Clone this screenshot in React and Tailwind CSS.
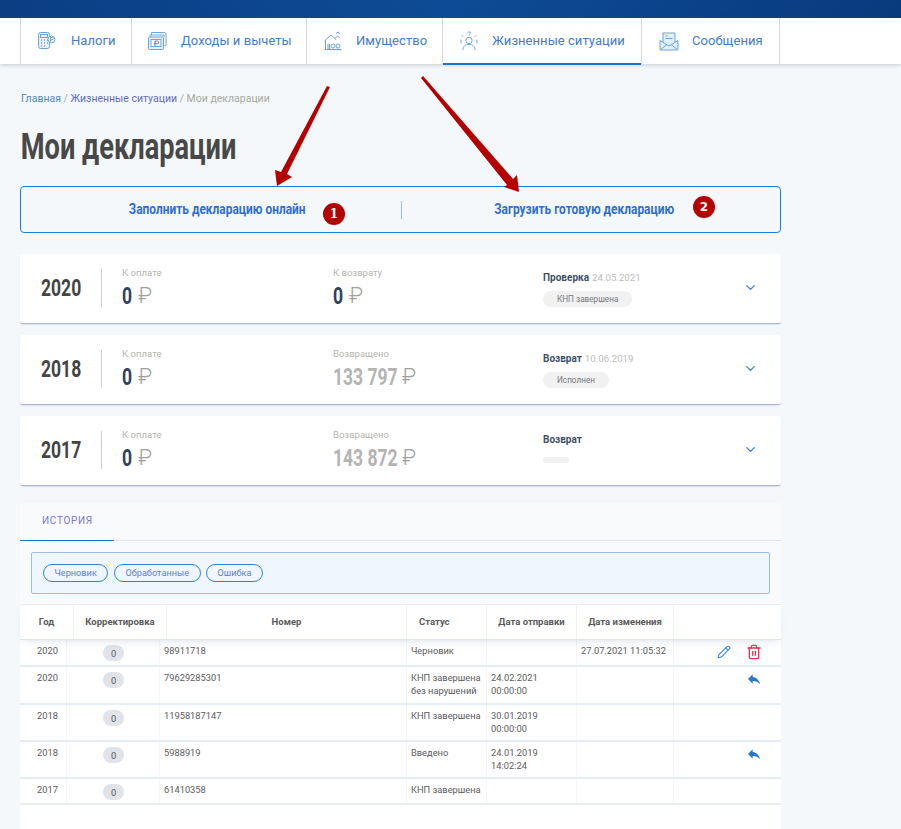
import React from "react";
import { Pencil, Trash2, ChevronDown } from "lucide-react";
import { MdReply } from "react-icons/md";

const I = ({ children, w = 22, h = 22 }) => (
  <svg width={w} height={h} viewBox="0 0 22 22" fill="none" stroke="#6ba3de" strokeWidth="1" className="shrink-0">{children}</svg>
);
const icons = [
  <I key="a"><rect x="2.500" y="2.500" width="11" height="16" rx="2" fill="#e3effa" /><rect x="4.500" y="4.500" width="7" height="3" /><path d="M5 10h1M8 10h1M11 10h1M5 13h1M8 13h1M11 13h1M5 16h1M8 16h1" strokeWidth="1.400" /><circle cx="15.500" cy="9.500" r="3.400" fill="#fff" /><path d="M14.500 11.500v-4h1.600a1 1 0 0 1 0 2.200h-2" /></I>,
  <I key="b"><path d="M4.500 5V2.500h13a1.500 1.500 0 0 1 1.500 1.500v11.500h-1.500" /><path d="M3 7V5h14v2" /><rect x="1.500" y="7" width="15" height="12.500" rx="1" fill="#e3effa" /><rect x="4" y="9.500" width="10" height="7" fill="#fff" /><path d="M8 16v-5h2.500a1.300 1.300 0 0 1 0 2.700H7" stroke="#4a86cc" /></I>,
  <I key="c"><path d="M2.500 11 9 5l5 4.500M3.500 10v9M13 8.500l2.500-2.500 2 1.500" /><path d="M2.500 19.500h17" strokeWidth="1.200" /><path d="M6 19v-5M7.500 19v-5" /><circle cx="11" cy="16" r="2" /><circle cx="16" cy="16" r="2" /><path d="M14 3.500l2.500-1.500 1 2" /></I>,
  <I key="d"><circle cx="11" cy="10.500" r="3.200" /><path d="M5 20c0-4 2.500-5.500 6-5.500s6 1.500 6 5.500" /><path d="M9.500 3c.5-1.500 3-1.500 3 0 0 1-1.500 1-1.500 2M4 5.500l1 1M18 5.500l-1 1M3 10v3M19 10v3" strokeLinecap="round" /></I>,
  <I key="e"><path d="M2 10.500v8.500a1 1 0 0 0 1 1h16a1 1 0 0 0 1-1v-8.500" fill="#e3effa" /><path d="M5 12V3h12v9" fill="#e3effa" /><path d="M7.500 6h2M7.500 8.500h7" /><path d="M2 10.500 11 16l9-5.500M2 20l7-5.500M20 20l-7-5.500" /></I>,
];

const navItems = [
  ["Налоги", "w-[111px]", 0, "pl-[15px]", "gap-[13px]"],
  ["Доходы и вычеты", "w-[175px]", 1, "pl-[15px]", "gap-[12px]"],
  ["Имущество", "w-[136px]", 2, "pl-[15px]", "gap-[12px]"],
  ["Жизненные ситуации", "w-[199px]", 3, "pl-[15px]", "gap-[12px]"],
  ["Сообщения", "w-[139px]", 4, "pl-[16px]", "gap-[12px]"],
];

const cards = [
  { year: "2020", right: "К возврату", amount: "0", dark: true, status: "Проверка", date: "24.05.2021", chip: "КНП завершена" },
  { year: "2018", right: "Возвращено", amount: "133 797", dark: false, status: "Возврат", date: "10.06.2019", chip: "Исполнен" },
  { year: "2017", right: "Возвращено", amount: "143 872", dark: false, status: "Возврат", date: "", chip: "" },
];

const Amount = ({ value, dark }) => (
  <div className="flex items-center gap-[4px] h-[25px] mt-[4px]">
    <div className={dark ? "w-[12px]" : "w-[65px]"}>
      <div className={`origin-left scale-x-[0.73] whitespace-nowrap font-bold text-[24px] leading-none ${dark ? "text-[#2c4260]" : "text-[#b4b4b4]"}`}>{value}</div>
    </div>
    <span className="text-[22px] font-light leading-none text-[#9f9f9f]">₽</span>
  </div>
);

const Card = ({ c }) => (
  <div className="h-[70px] bg-white rounded-[3px] border-b border-[#aab5d1] flex items-start pl-[21px] shadow-[0_1px_1px_rgba(170,181,209,0.3)]">
    <div className="w-[60px] mt-[22px] origin-left scale-x-[0.73] font-bold text-[24px] leading-none text-[#444444] whitespace-nowrap">{c.year}</div>
    <div className="w-px h-[38px] mt-[15px] bg-[#c9cfd8]" />
    <div className="w-[231px] pl-[20px] pt-[13px]">
      <div className="text-[9.6px] leading-[12px] text-[#b5b5b0]">К оплате</div>
      <Amount value="0" dark />
    </div>
    <div className="w-[210px] pt-[13px]">
      <div className="text-[9.5px] leading-[12px] text-[#b5b5b0]">{c.right}</div>
      <Amount value={c.amount} dark={c.dark} />
    </div>
    <div className="w-[200px] pt-[16px]">
      <div className="flex items-baseline gap-[3px] h-[15px]">
        <span className="text-[10px] font-bold text-[#3e5068]">{c.status}</span>
        <span className="text-[9.7px] text-[#bcbcbc]">{c.date}</span>
      </div>
      {c.chip ? (
        <div className="mt-[4px] inline-flex h-[16px] items-center rounded-full bg-[#f1f1f1] px-[14px] text-[8.2px] text-[#77787c]">{c.chip}</div>
      ) : (
        <div className="mt-[10px] h-[6px] w-[26px] rounded-[3px] bg-[#f1f1f1]" />
      )}
    </div>
    <ChevronDown className="text-[#3b82d6] mt-[26px]" size={15} strokeWidth={2.2} />
  </div>
);

const head = [
  ["Год", "w-[54px] justify-center"],
  ["Корректировка", "w-[93px] justify-center"],
  ["Номер", "w-[240px] justify-center"],
  ["Статус", "w-[80px] pl-[12px]"],
  ["Дата отправки", "w-[90px] justify-center"],
  ["Дата изменения", "w-[97px] justify-center"],
];

const rows = [
  { h: "h-[27px]", y: "2020", n: "98911718", s: ["Черновик"], d: [], m: "27.07.2021 11:05:32", act: "edit" },
  { h: "h-[38px]", y: "2020", n: "79629285301", s: ["КНП завершена", "без нарушений"], d: ["24.02.2021", "00:00:00"], m: "", act: "reply" },
  { h: "h-[37px]", y: "2018", n: "11958187147", s: ["КНП завершена"], d: ["30.01.2019", "00:00:00"], m: "", act: "" },
  { h: "h-[37px]", y: "2018", n: "5988919", s: ["Введено"], d: ["24.01.2019", "14:02:24"], m: "", act: "reply" },
  { h: "h-[26px]", y: "2017", n: "61410358", s: ["КНП завершена"], d: [], m: "", act: "" },
];

const Cell = ({ className = "", children }) => (
  <div className={`h-full border-r border-[#f3f5f8] text-[9.3px] leading-[13px] text-[#5b5b5b] pt-[4px] whitespace-nowrap ${className}`}>{children}</div>
);

const Row = ({ r, last }) => (
  <div className={`${r.h} flex border-b-2 ${last ? "border-[#e9edf2]" : "border-[#e6ecf3]"}`}>
    <Cell className="w-[47px] pl-[17px]">{r.y}</Cell>
    <Cell className="w-[93px] flex justify-center pl-[1px]">
      <span className="flex h-[16px] w-[21px] items-center justify-center rounded-full bg-[#e0e3ea] mt-[1px]">0</span>
    </Cell>
    <Cell className="w-[247px] pl-[4px]">{r.n}</Cell>
    <Cell className="w-[80px] pl-[4px]">{r.s.map((t) => <div key={t}>{t}</div>)}</Cell>
    <Cell className="w-[90px] pl-[4px]">{r.d.map((t) => <div key={t}>{t}</div>)}</Cell>
    <Cell className="w-[97px] pl-[4px]">{r.m}</Cell>
    <div className="flex-1 flex justify-end items-start pt-[4px] pr-[19px] gap-[15px]">
      {r.act === "edit" && <Pencil size={14} strokeWidth={1.8} className="text-[#3a82d8] mt-[1px]" />}
      {r.act === "edit" && <Trash2 size={16} strokeWidth={2} className="text-[#f0304e]" />}
      {r.act === "reply" && <MdReply size={16} className="text-[#2a77cc]" />}
    </div>
  </div>
);

export default function App() {
  return (
    <div className="relative w-[901px] h-[829px] overflow-hidden bg-[#f4f8fb] flex flex-col font-['Roboto',sans-serif]">
      <div className="h-[18px] bg-gradient-to-r from-[#0a3f84] via-[#0e4b96] to-[#083b7e]" />
      <nav className="h-[46px] bg-white flex pl-[20px] shadow-[0_1px_4px_rgba(90,100,110,0.3)]">
        {navItems.map(([t, w, i, pl, gap]) => (
          <div key={t} className={`${w} ${pl} ${gap} relative flex items-center border-l border-[#d8d8d8] ${i === 4 ? "border-r" : ""}`}>
            {icons[i]}
            <span className="text-[13px] tracking-[0.05px] text-[#3f7ccb] whitespace-nowrap">{t}</span>
            {i === 3 && <div className="absolute left-0 right-0 bottom-[-1px] h-[2px] bg-[#1c73cf]" />}
          </div>
        ))}
      </nav>

      <div className="pl-[20px] w-[781px] flex-1 flex flex-col">
        <div className="mt-[28px] h-[14px] text-[10.5px] leading-[14px] pl-px whitespace-nowrap">
          <span className="text-[#4a84cc]">Главная</span>
          <span className="text-[#a8a8a8]"> / </span>
          <span className="text-[#5d6cc0]">Жизненные ситуации</span>
          <span className="text-[#a8a8a8]"> / </span>
          <span className="text-[#a8a8a0]">Мои декларации</span>
        </div>
        <h1 className="mt-[16px] h-[50px] pl-px origin-left scale-x-[0.735] whitespace-nowrap text-[37px] leading-[50px] font-bold text-[#484848]">Мои декларации</h1>

        <div className="mt-[14px] h-[47px] rounded-[4px] border border-[#1c7edb] flex items-center">
          <div className="w-[380px] flex justify-center pl-[36px] pr-[24px]">
            <div className="scale-x-[0.795] whitespace-nowrap font-bold text-[15px] text-[#2f6fc9]">Заполнить декларацию онлайн</div>
          </div>
          <div className="w-px h-[18px] bg-[#9cbbd8]" />
          <div className="flex-1 flex justify-center pr-[14px]">
            <div className="scale-x-[0.795] whitespace-nowrap font-bold text-[15px] text-[#2f6fc9]">Загрузить готовую декларацию</div>
          </div>
        </div>

        <div className="mt-[21px] flex flex-col gap-[11px]">
          {cards.map((c) => <Card key={c.year} c={c} />)}
        </div>

        <div className="mt-[17px] flex-1 flex flex-col bg-[#f8fafc]">
          <div className="h-[38px] border-b border-[#dfe3ea] shrink-0">
            <div className="w-[94px] h-[38px] border-b border-[#1c73cf] pl-[22px] pt-[12px] text-[10px] leading-[12px] tracking-[0.7px] text-[#7a76cf]">ИСТОРИЯ</div>
          </div>
          <div className="mx-[11px] mt-[11px] h-[42px] rounded-[2px] border border-[#97c0e9] bg-[#eff6fe] flex items-center pl-[11px] gap-[5.5px] shrink-0">
            {["Черновик", "Обработанные", "Ошибка"].map((t) => (
              <span key={t} className="h-[18px] px-[10.5px] flex items-center rounded-full border border-[#2c84dc] text-[9.2px] text-[#5e80d0]">{t}</span>
            ))}
          </div>
          <div className="mt-[10px] flex-1 bg-white border-t border-[#e6ebf1]">
            <div className="h-[35px] flex shadow-[0_5px_8px_-4px_rgba(140,155,180,0.3)] border-b border-[#dce4ee] relative">
              {head.map(([t, w]) => (
                <div key={t} className={`${w} h-full flex items-center border-r border-[#eef1f5] text-[9.5px] font-bold text-[#5a5a5a]`}>{t}</div>
              ))}
            </div>
            {rows.map((r, i) => <Row key={i} r={r} last={i === rows.length - 1} />)}
          </div>
        </div>
      </div>

      <svg className="absolute left-0 top-0 pointer-events-none" width="901" height="829" viewBox="0 0 901 829">
        <polygon points="327,86 330,87 287,174 292,177 277,186 275,170 281,172" fill="#b40000" />
        <polygon points="423,76 421,78 507,185 504,187 519,192 517,175 513,179" fill="#b40000" />
      </svg>
      <div className="absolute left-[323px] top-[203px] w-[22px] h-[22px] rounded-full bg-[#b40000] flex items-center justify-center text-white text-[12px] font-bold font-['DejaVu_Serif',serif]">1</div>
      <div className="absolute left-[693px] top-[196px] w-[22px] h-[22px] rounded-full bg-[#b40000] flex items-center justify-center text-white text-[12px] font-bold font-['DejaVu_Sans',sans-serif]">2</div>
    </div>
  );
}
